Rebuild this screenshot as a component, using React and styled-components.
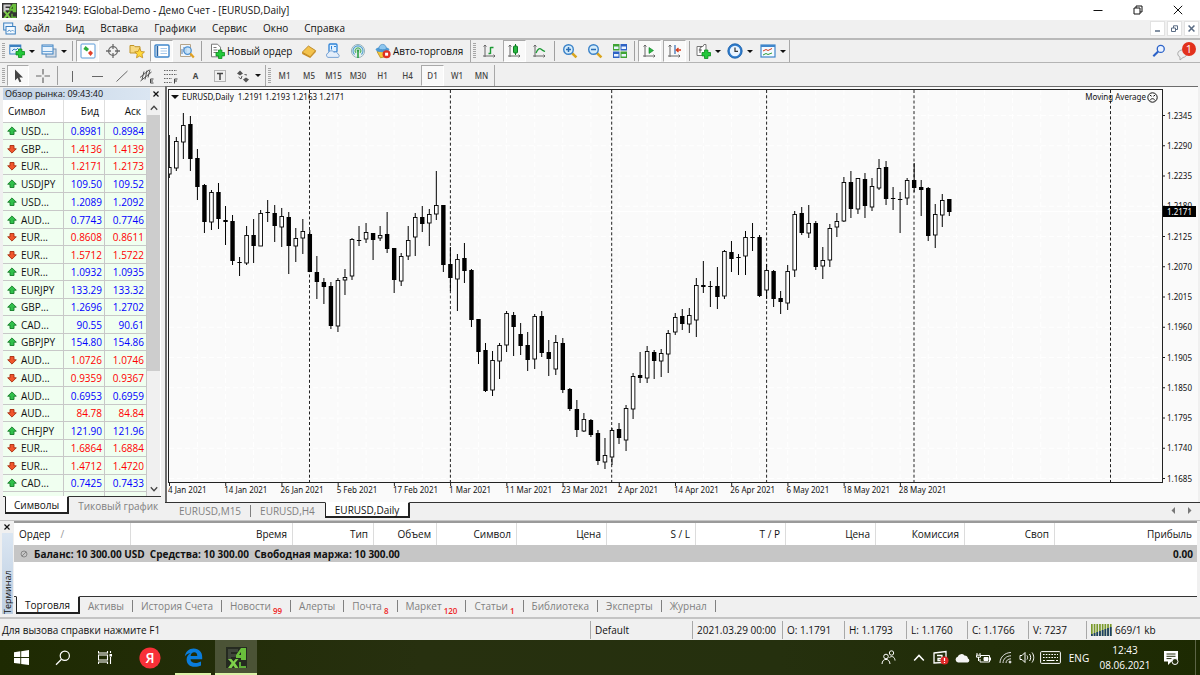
import React from "react";
import styled, { createGlobalStyle, css } from "styled-components";

const UI = '"Open Sans", "Noto Sans", sans-serif';
const SMALL = '"Noto Sans", "Open Sans", sans-serif';

const GlobalStyle = createGlobalStyle`
  *, *::before, *::after { box-sizing: border-box; }
  body { margin: 0; background: #f0f0f0; color: #111; font-family: ${UI}; font-size: 10px; line-height: 14px; }
  button { font: inherit; color: inherit; background: none; border: 0; padding: 0; margin: 0; white-space: nowrap; }
  svg { display: block; flex: none; }
`;

/* ---------- shell ---------- */
const Shell = styled.div`
  display: flex;
  flex-direction: column;
  height: 100vh;
  min-height: 560px;
  overflow: hidden;
`;
const TitleBar = styled.header`
  display: flex;
  align-items: center;
  flex: none;
  height: 20px;
  padding-left: 2px;
  gap: 4px;
  background: #fff;
`;
const AppTitle = styled.h1`
  flex: 1;
  margin: 0;
  font-size: 10px;
  font-weight: 400;
`;
const CaptionButton = styled.button`
  display: flex;
  align-items: center;
  justify-content: center;
  width: 40px;
  height: 18px;
`;
const CaptionGroup = styled.div`
  display: flex;
  padding-right: 2px;
`;
const MenuBar = styled.nav`
  display: flex;
  align-items: center;
  flex: none;
  height: 20px;
  padding: 0 0 2px 3px;
  border-bottom: 2px solid #b9b9b9;
`;
const MenuItem = styled.button`
  padding: 0 8px;
  font-size: 10px;
`;
const MdiGroup = styled.div`
  display: flex;
  gap: 2px;
  margin-left: auto;
  padding-right: 1px;
`;
const MdiButton = styled.button`
  display: flex;
  align-items: center;
  justify-content: center;
  width: 15px;
  height: 15px;
  background: #fff;
  border: 1px solid #e2e2e2;
`;

/* ---------- toolbars ---------- */
const Toolbar = styled.div`
  display: flex;
  align-items: stretch;
  flex: none;
  height: 23px;
  padding-top: ${(p) => (p.$last ? 2 : 0)}px;
  border-bottom: ${(p) => (p.$last ? "0" : "1px solid #b4b4b4")};
`;
const Strip = styled.div`
  display: flex;
  align-items: stretch;
  border-right: 1px solid #a8a8a8;
`;
const Grip = styled.span`
  flex: none;
  width: 6px;
  margin: 3px 0;
  background: repeating-linear-gradient(#a6a6a6 0 1px, transparent 1px 2px) 2px 0 / 3px 100% no-repeat;
`;
const Divider = styled.span`
  flex: none;
  width: 5px;
  margin: 1px 0;
  background: linear-gradient(#a0a0a0, #a0a0a0) 2px 0 / 1px 100% no-repeat;
`;
const Tool = styled.button`
  display: flex;
  align-items: center;
  justify-content: ${(p) => (p.$start ? "flex-start" : "center")};
  gap: ${(p) => (p.$menu ? 4 : 2)}px;
  padding-left: ${(p) => (p.$menu ? 3 : p.$start ? 5 : 0)}px;
  width: ${(p) => p.$w || 25}px;
  color: ${(p) => (p.$period ? "#444" : "#111")};
  font-family: ${(p) => (p.$period ? SMALL : UI)};
  font-size: ${(p) => (p.$period ? 8 : 10)}px;
  font-weight: ${(p) => (p.$period ? 500 : 400)};
  ${(p) =>
    p.$on &&
    css`
      margin: 0 1px;
      width: ${(p.$w || 25) - 2}px;
      background: #f9f9f9;
      border: 1px solid #a9a9a9;
      border-right-color: #fff;
      border-bottom-color: #fff;
    `}
`;
const Caret = styled.span`
  border: solid transparent;
  border-width: ${(p) => (p.$big ? "4px 4px 0" : "3px 3px 0")};
  border-top-color: #111;
`;
const ToolbarEnd = styled.div`
  display: flex;
  align-items: center;
  gap: 9px;
  margin-left: auto;
  padding-right: 3px;
`;

/* ---------- workspace ---------- */
const Workspace = styled.main`
  display: flex;
  flex: 1;
  min-height: 0;
  border-bottom: 1px solid #c4c4c4;
`;
const Watch = styled.section`
  display: flex;
  flex-direction: column;
  flex: none;
  width: 165px;
  padding: 0 4px 0 3px;
  border-top: 1px solid #a0a0a0;
`;
const WatchHead = styled.div`
  display: flex;
  align-items: center;
  height: 13px;
  flex: none;
`;
const WatchTitle = styled.h2`
  flex: 1;
  margin: 0;
  padding-left: 2px;
  height: 12px;
  line-height: 12px;
  font-size: 9px;
  font-weight: 400;
  background: linear-gradient(90deg, #c3d3e5, #dbe6f2);
`;
const CloseMini = styled.button`
  display: flex;
  align-items: center;
  justify-content: center;
  width: 11px;
  height: 12px;
`;
const WatchBody = styled.div`
  display: flex;
  flex: 1;
  min-height: 0;
  overflow: hidden;
  background: #fff;
`;
const WatchTable = styled.table`
  flex: none;
  width: 144px;
  height: 100px;
  table-layout: fixed;
  border-collapse: separate;
  border-spacing: 0;
  font-size: 10px;
  line-height: 12px;

  th { height: 22px; padding: 0 5px; font-weight: 400; text-align: right; border-right: 1px solid #dedede; }
  th:first-child { text-align: left; }
  tbody tr { height: 17px; }
  tbody tr:nth-child(2n), tbody tr:nth-child(10n + 5) { height: 18px; }
`;
const SymbolCell = styled.td`
  padding: 0 0 0 4px;
  background: #f0fff0;
  border: solid #c8c8c8;
  border-width: 1px 1px 0 0;
`;
const SymbolName = styled.span`
  display: flex;
  align-items: center;
  gap: 4px;
`;
const PriceCell = styled.td`
  padding: 0 2px 0 0;
  text-align: right;
  color: ${(p) => (p.$up ? "#0000ff" : "#ff0000")};
  background: #f0fff0;
  border: solid #c8c8c8;
  border-width: 1px 1px 0 0;
`;
const ScrollTrack = styled.div`
  display: flex;
  flex-direction: column;
  align-items: center;
  width: 13px;
  background: #f0f0f0;
`;
const ScrollButton = styled.button`
  display: flex;
  align-items: center;
  justify-content: center;
  width: 13px;
  height: 15px;
`;
const ScrollArea = styled.div`
  flex: 1;
  width: 100%;
`;
const ScrollThumb = styled.div`
  height: 70%;
  background: #cdcdcd;
`;

const Tabs = styled.div`
  display: flex;
  flex: none;
  align-items: center;
  height: ${(p) => p.$h || 18}px;
  padding-left: ${(p) => p.$indent || 0}px;
  color: #808080;
  border-top: 1px solid #333;
`;
const Tab = styled.button`
  display: flex;
  align-items: center;
  height: 12px;
  padding: 0 ${(p) => p.$pad || 9}px;
  border-right: 1px solid ${(p) => (p.$bare ? "transparent" : "#808080")};
  ${(p) =>
    p.$on &&
    css`
      align-self: stretch;
      height: auto;
      margin-top: -1px;
      color: #111;
      background: #fff;
      border: 1px solid #222;
      border-top-color: #fff;
      border-width: 1px 2px 2px 1px;
    `}
`;
const Count = styled.sub`
  align-self: flex-end;
  margin: 0 0 -4px 2px;
  font-size: 8px;
  line-height: 10px;
  font-weight: 600;
  color: #ee2222;
`;

/* ---------- chart ---------- */
const ChartColumn = styled.section`
  display: flex;
  flex-direction: column;
  flex: 1;
  min-width: 0;
`;
const ChartWindow = styled.div`
  display: grid;
  grid-template-columns: minmax(0, 1fr) 35px;
  grid-template-rows: minmax(0, 1fr) 19px;
  flex: 1;
  min-height: 0;
  margin-right: 2px;
  padding: 2px 0 0 1px;
  border: solid #6c6c6c;
  border-width: 1px 0 0 2px;
  background: #fafafa;
`;
const Plot = styled.div`
  position: relative;
  border: 1px solid #222;
  overflow: hidden;
`;
const PlotCaption = styled.div`
  position: absolute;
  top: 1px;
  left: 2px;
  display: flex;
  align-items: center;
  gap: 3px;
  font: 8px/12px ${SMALL};
  white-space: pre;
`;
const PlotExpert = styled(PlotCaption)`
  left: auto;
  right: 4px;
  gap: 1px;
`;
const AxisText = styled.text`
  font: 8px ${SMALL};
  fill: ${(p) => p.fill || "#111"};
`;
const ChartTabs = styled(Tabs)`
  height: 16px;
  margin-bottom: 2px;
`;
const TabScroll = styled.div`
  display: flex;
  align-items: center;
  gap: 11px;
  margin-left: auto;
  padding-right: 8px;
`;

/* ---------- terminal ---------- */
const Terminal = styled.section`
  display: flex;
  flex: none;
  height: 98px;
  padding: 0 3px 3px 0;
  border-bottom: 2px solid #c4c4c4;
`;
const TerminalRail = styled.div`
  display: flex;
  flex-direction: column;
  align-items: center;
  width: 14px;
`;
const RailTitle = styled.h2`
  flex: 1;
  width: 11px;
  margin: 0;
  writing-mode: vertical-rl;
  transform: rotate(180deg);
  font-size: 9px;
  line-height: 11px;
  font-weight: 400;
  background: linear-gradient(#bccde0, #dbe6f2);
`;
const TerminalMain = styled.div`
  display: flex;
  flex-direction: column;
  flex: 1;
  min-width: 0;
  border-top: 2px solid #9a9a9a;
`;
const TradePane = styled.div`
  flex: 1;
  min-height: 0;
  background: #fff;
`;
const TradeTable = styled.table`
  width: 100%;
  table-layout: fixed;
  border-collapse: separate;
  border-spacing: 0;

  th { height: 22px; padding: 0 5px; font-weight: 400; text-align: right; border-right: 1px solid #dcdcdc; }
  th:first-child { text-align: left; }
  th:last-child { border-right: 0; }
  td { height: 17px; padding: 0 4px; background: #c6c6c6; font-weight: 700; }
  td:last-child { text-align: right; }
`;
const Balance = styled.div`
  display: flex;
  align-items: center;
  gap: 6px;
  padding-left: 2px;
  white-space: pre;
`;
const SortMark = styled.span`
  padding-left: 10px;
  color: #999;
`;

/* ---------- status bar ---------- */
const StatusBar = styled.footer`
  display: flex;
  align-items: stretch;
  flex: none;
  height: 21px;
  padding: 2px 0 1px;
`;
const StatusCell = styled.span`
  display: flex;
  align-items: center;
  gap: 3px;
  width: ${(p) => p.$w}px;
  padding-left: 4px;
  border-left: 1px solid #a8a8a8;
  white-space: nowrap;
`;
const StatusHelp = styled.span`
  flex: 1;
  display: flex;
  align-items: center;
  padding-left: 2px;
`;

/* ---------- taskbar ---------- */
const Taskbar = styled.nav`
  display: flex;
  align-items: stretch;
  flex: none;
  height: 35px;
  color: #fff;
  background: linear-gradient(90deg, #1e2a02 0%, #27300f 35%, #25300e 65%, #1d2a02 100%);
`;
const TaskButton = styled.button`
  display: flex;
  align-items: center;
  justify-content: center;
  width: 42px;
  background: ${(p) => (p.$active ? "#4b5336" : "none")};
  ${(p) => p.$open && css`border-bottom: 2px solid #dcf2a8; padding-top: 2px;`}
  ${(p) => p.$open && !p.$active && css`width: 36px; margin: 0 4px;`}
`;
const TaskGap = styled.span`
  width: 3px;
`;
const Tray = styled.div`
  display: flex;
  align-items: center;
  margin-left: auto;
`;
const TrayButton = styled.button`
  display: flex;
  align-items: center;
  justify-content: center;
  width: ${(p) => p.$w || 21}px;
  height: 100%;
`;
const Clock = styled.div`
  width: 60px;
  text-align: center;
  line-height: 15px;
`;
const DesktopEdge = styled.span`
  align-self: stretch;
  width: 5px;
  margin-left: 8px;
  border-left: 1px solid #5c6446;
`;

/* ---------- icons ---------- */
const G = ({ s = 16, children }) => (
  <svg width={s} height={s} viewBox="0 0 16 16" fill="none" aria-hidden="true">{children}</svg>
);
const Plus = ({ x = 6, y = 6 }) => (
  <path transform={`translate(${x} ${y})`} d="M3 0.5h3.4V3h2.6v3.4H6.4V9H3V6.4H.5V3H3z" fill="#22c83a" stroke="#0b8a1c" strokeWidth=".8" />
);
const Axes = () => (
  <path d="M3 2v12M1 13h12M1.6 3.6 3 2l1.4 1.6M11.6 11.6 13 13l-1.4 1.4" stroke="#666" strokeWidth="1" />
);
const icons = {
  newChart: <G><rect x=".8" y="2" width="11" height="9" fill="#e3f1fc" stroke="#3a7fbf" /><path d="M1 3h11" stroke="#3a7fbf" strokeWidth="2" /><path d="M3 8l2-2 2 1 2-2" stroke="#3a7fbf" /><Plus x={6.5} y={5.5} /></G>,
  profiles: <G><rect x="5" y="6" width="10" height="8" fill="#d5dde6" stroke="#6d90b4" /><rect x="1" y="2" width="11" height="9" fill="#e8f3fd" stroke="#3a7fbf" /><path d="M1 3.5h11M1 8.5h11" stroke="#6ba4d8" /></G>,
  market: <G><rect x="1" y="1" width="14" height="14" rx="1" fill="#fff" stroke="#5b9bd8" /><path d="M5.5 3 9 6 7 8.6 3.4 6z" fill="#2fae3a" /><path d="M10.5 7.5 13 10l-2.4 3L8 10z" fill="#e0402a" /></G>,
  crosshair: <G><circle cx="8" cy="8" r="4.4" stroke="#6b6b6b" strokeWidth="1.3" /><path d="M8 1v5M8 10v5M1 8h5M10 8h5" stroke="#6b6b6b" strokeWidth="1.3" /></G>,
  folderStar: <G><path d="M1 2.500h4l1 1.200h5V10H1z" fill="#f7d981" stroke="#c09428" /><path d="m10.6 5.3 1.5 3.2 3.4.4-2.5 2.4.7 3.5-3.1-1.7-3.1 1.7.7-3.5-2.5-2.4 3.4-.4z" fill="#ffd83a" stroke="#c08a17" strokeWidth=".8" /></G>,
  terminal: <G><rect x="1" y="2" width="14" height="12" rx="1" fill="#fff" stroke="#3f86cb" strokeWidth="1.4" /><path d="M3.4 3v10" stroke="#2460a0" strokeWidth="1.6" /><path d="M6.5 5.5H13M6.5 8H13M6.5 10.5H13" stroke="#a6c8ea" /></G>,
  tester: <G><path d="M1.5 1.5h10v12h-10z" fill="#eef5fc" stroke="#b6a488" /><path d="M3 11V6M5 9V4M7 10V5" stroke="#5a7ea8" /><circle cx="8.6" cy="7.6" r="3.7" fill="#bfe0f8cc" stroke="#4c8fd0" strokeWidth="1.2" /><path d="m11.3 10.6 3.5 3.8" stroke="#e0a020" strokeWidth="2.2" /></G>,
  order: <G><path d="M2.5 1.2h6l3 3v9.6h-9z" fill="#fff" stroke="#777" /><path d="M4.5 4.5h3M4.5 7h4M4.5 9.5h3" stroke="#777" /><Plus x={6.5} y={6.5} /></G>,
  book: <G><path d="M1.2 9.2 7.4 3l7.2 4.6-5.4 6.2z" fill="#f3c24c" stroke="#b07a14" strokeWidth=".8" /><path d="M1.200 9.200v1.800l8 4 5.600-6V7.600l-5.600 6.200z" fill="#c98b1c" /></G>,
  cloudPc: <G><rect x="4" y="1" width="8" height="8" rx="1" fill="#dff0ff" stroke="#2f83d6" strokeWidth="1.3" /><path d="M6.500 3v3.500M9 3.500h2" stroke="#2f83d6" /><path d="M3 14.400a2.300 2.300 0 0 1 .2-4.400 3.200 3.200 0 0 1 5.800-.7 2.700 2.700 0 0 1 4 1.900 1.700 1.700 0 0 1 .2 3.200z" fill="#e4eefa" stroke="#7aa4d4" /></G>,
  signal: <G><circle cx="8" cy="8" r="6.6" fill="#e6eef0" stroke="#9ab4bc" /><path d="M4.6 11.5a5 5 0 1 1 6.8 0" stroke="#4e9fd0" strokeWidth="1.1" /><path d="M6 9.8a2.8 2.8 0 1 1 4 0" stroke="#55b563" strokeWidth="1.1" /><circle cx="8" cy="7.8" r="1.3" fill="#2fa045" /><path d="M8 8.5V15" stroke="#2fa045" strokeWidth="1.6" /></G>,
  auto: <G><path d="M2 8.5 13 7l-2 6.5-5.5 1.3z" fill="#f2c63c" stroke="#b88a1c" strokeWidth=".8" /><ellipse cx="7.5" cy="6.6" rx="6.8" ry="2.6" fill="#4e9bd6" /><path d="M3.8 6c0-3 1.7-4.6 3.8-4.6S11.400 3 11.400 6c-2 1-5.600 1-7.600 0z" fill="#8cc6ef" stroke="#4288c4" strokeWidth=".7" /><circle cx="11.6" cy="11.2" r="4" fill="#e03020" /><rect x="10.100" y="9.700" width="3" height="3" fill="#fff" /></G>,
  bars: <G><Axes /><path d="M8.500 4v7M8.500 4.500h3M6.500 10.500h2" stroke="#1c9a34" strokeWidth="1.400" /></G>,
  candles: <G><Axes /><path d="M8.500 1v11" stroke="#0f7a22" /><rect x="6.500" y="3" width="4" height="7" rx="1" fill="#27b840" stroke="#0f7a22" /></G>,
  line: <G><Axes /><path d="M4 10c2-5 4-5 5.500-3.500S12 8 13 8.500" stroke="#1c9a34" strokeWidth="1.300" /></G>,
  zoomIn: <G><path d="m9.800 9.800 4.600 4.600" stroke="#d9a51e" strokeWidth="2.600" /><circle cx="6.500" cy="6.500" r="4.800" fill="#d4ecfb" stroke="#3b82c8" strokeWidth="1.400" /><path d="M6.500 4v5M4 6.500h5" stroke="#2a6db4" strokeWidth="1.500" /></G>,
  zoomOut: <G><path d="m9.800 9.800 4.600 4.600" stroke="#d9a51e" strokeWidth="2.600" /><circle cx="6.500" cy="6.500" r="4.800" fill="#d4ecfb" stroke="#3b82c8" strokeWidth="1.400" /><path d="M4 6.500h5" stroke="#2a6db4" strokeWidth="1.500" /></G>,
  tile: <G><rect x="1" y="1" width="6.500" height="6.500" fill="#3fa435" /><rect x="8.500" y="1" width="6.500" height="6.500" fill="#2e62c4" /><rect x="1" y="8.500" width="6.500" height="6.500" fill="#2e62c4" /><rect x="8.500" y="8.500" width="6.500" height="6.500" fill="#3fa435" /><path d="M2 4.800h4.500M9.500 4.800H14M2 12.300h4.500M9.500 12.300H14" stroke="#e9f3ff" strokeWidth="2.600" /></G>,
  autoScroll: <G><Axes /><path d="M7 4.500v6l4.500-3z" fill="#27b840" stroke="#0f7a22" strokeWidth=".6" /></G>,
  shift: <G><Axes /><path d="M8 2v9" stroke="#2f6ab0" strokeWidth="1.200" /><path d="M14 7H9.500M11.500 5 9.300 7l2.200 2" stroke="#d43a1c" strokeWidth="1.300" /></G>,
  indicators: <G><path d="M2 3.500h6l1-2h2v11H2z" fill="#fff" stroke="#777" /><path d="M7 4c-1.500-.5-2 .5-2 2v4M3.800 7h3" stroke="#555" /><Plus x={6.500} y={6.500} /></G>,
  clock: <G><circle cx="8" cy="8" r="6.300" fill="#e9f4ff" stroke="#2f7ccc" strokeWidth="2.200" /><circle cx="8" cy="8" r="7.200" stroke="#1d5a9e" strokeWidth=".6" /><path d="M8 4.500V8.300h3" stroke="#333" strokeWidth="1.200" /></G>,
  template: <G><rect x="1" y="2" width="14" height="12" fill="#f4faff" stroke="#3f86cb" strokeWidth="1.200" /><path d="M1 3h14" stroke="#3f86cb" strokeWidth="2" /><path d="m3 8 3-1.500 2 1 4-2" stroke="#d43a1c" /><path d="m3 12 3-1.500 2 1L12 10" stroke="#2b9a3a" /></G>,
  cursor: <G><path d="M5 1.500v11l2.600-2.400 1.900 4.100 1.800-.8-1.900-4h3.600z" fill="#444" /></G>,
  cross: <G><path d="M8 1v5.500M8 9.500V15M1 8h5.500M9.500 8H15" stroke="#666" strokeWidth="1.200" /></G>,
  vline: <G><path d="M8.500 3v11" stroke="#666" /></G>,
  hline: <G><path d="M3 8.500h11" stroke="#666" /></G>,
  trend: <G><path d="M2.500 13.500l11-10.500" stroke="#666" /></G>,
  channel: <G><path d="M1 9.500 10 2M1.500 13 12.500 4M5 3.500l-2 8M8 2.500l-2 9M11 1.500l-2 8" stroke="#555" strokeWidth="1" /><path d="M14.500 11h-3v4h3M11.500 13h2.500" stroke="#444" /></G>,
  fibo: <G><path d="M1 2.500h13M1 6.500h13M1 10.500h8M1 14.500h8" stroke="#666" strokeDasharray="1.500 1" /><path d="M14.500 11h-3v4.500M11.500 13h2.500" stroke="#444" /></G>,
  label: <G><rect x="2.500" y="2.500" width="11" height="11" stroke="#777" strokeDasharray="1 1" /><path d="M5 5.500h6M8 5.500V12" stroke="#444" strokeWidth="1.500" /></G>,
  arrows: <G><path d="M2 5.500 5 2.500l3 3-3 2zM8 11.500l3-2 3 2-3 3z" fill="#555" /><path d="m3.500 9 2.500 2 1-3M9.500 6.500l2.500.5" stroke="#555" /></G>,
  search: <G s={14}><circle cx="10" cy="5.600" r="4" fill="#eaf2ff" stroke="#2b62c8" strokeWidth="1.500" /><path d="M7 8.500 1.500 14" stroke="#2b62c8" strokeWidth="2.400" /></G>,
};
const AppMark = ({ s, dark }) => (
  <svg width={s} height={s} viewBox="0 0 21 21" aria-hidden="true">
    {dark ? <rect width="21" height="21" fill="#252a20" /> : <rect width="21" height="21" fill="#333" />}
    <path d="M2 2h10v3H5v2h5v3H5v3H2z" fill={dark ? "#3f463a" : "#ccc"} />
    <path d="M15 1h5v12h-5v-2h-5V8z" fill="#6abf3c" /><path d="M13 8h2V5z" fill="#222" />
    <path d="m2 12 3.500 0 2 2.500 2-2.500h3l-3.500 4 3.500 5H9l-1.700-2.500L5.600 21H2l3.600-5z" fill="#7fd04a" /><path d="M13 15h2v4h5v2h-7z" fill="#5fae38" />
  </svg>
);
const CrossIcon = ({ s = 10, w = 1, c = "#111" }) => (
  <svg width={s} height={s} viewBox="0 0 10 10" aria-hidden="true"><path d="M.8.8l8.400 8.400M9.200.8.8 9.200" stroke={c} strokeWidth={w} /></svg>
);
const TrendArrow = ({ up }) => (
  <svg width="10" height="10" viewBox="0 0 10 10" aria-hidden="true">
    <path transform={up ? undefined : "rotate(180 5 5)"} d="M5 .9 9.300 5.200H7V8.500H3V5.200H.7z" fill={up ? "#2fc04a" : "#f0562c"} stroke={up ? "#147a28" : "#a82c10"} strokeWidth=".9" />
  </svg>
);
const Chevron = ({ down, s = 8, c = "#444", w = 1.3 }) => (
  <svg width={s} height={s} viewBox="0 0 8 8" fill="none" aria-hidden="true"><path d={down ? "M.8 2.300 4 5.700l3.200-3.400" : "M.8 5.700 4 2.300l3.200 3.400"} stroke={c} strokeWidth={w} /></svg>
);

/* ---------- data ---------- */
const quotes = [
  ["USD...", "0.8981", "0.8984", 1], ["GBP...", "1.4136", "1.4139", 0], ["EUR...", "1.2171", "1.2173", 0],
  ["USDJPY", "109.50", "109.52", 1], ["USD...", "1.2089", "1.2092", 1], ["AUD...", "0.7743", "0.7746", 1],
  ["EUR...", "0.8608", "0.8611", 0], ["EUR...", "1.5712", "1.5722", 0], ["EUR...", "1.0932", "1.0935", 1],
  ["EURJPY", "133.29", "133.32", 1], ["GBP...", "1.2696", "1.2702", 1], ["CAD...", "90.55", "90.61", 1],
  ["GBPJPY", "154.80", "154.86", 1], ["AUD...", "1.0726", "1.0746", 0], ["AUD...", "0.9359", "0.9367", 0],
  ["AUD...", "0.6953", "0.6959", 1], ["AUD...", "84.78", "84.84", 0], ["CHFJPY", "121.90", "121.96", 1],
  ["EUR...", "1.6864", "1.6884", 0], ["EUR...", "1.4712", "1.4720", 0], ["CAD...", "0.7425", "0.7433", 1],
  ["NZD...", "78.80", "78.84", 1],
];
const menu = ["Файл", "Вид", "Вставка", "Графики", "Сервис", "Окно", "Справка"];
const dates = ["4 Jan 2021", "14 Jan 2021", "26 Jan 2021", "5 Feb 2021", "17 Feb 2021", "1 Mar 2021", "11 Mar 2021", "23 Mar 2021", "2 Apr 2021", "14 Apr 2021", "26 Apr 2021", "6 May 2021", "18 May 2021", "28 May 2021"];
const prices = ["1.2345", "1.2290", "1.2235", "1.2180", "1.2125", "1.2070", "1.2015", "1.1960", "1.1905", "1.1850", "1.1795", "1.1740", "1.1685"];
/* high, body top, body bottom, low, falling */
const candles = [
  [135,167,174,178,0],[137,141,168,171,0],[113,125,142,159,0],[116,124,159,171,1],[149,158,187,200,1],[184,185,222,233,1],[190,192,222,230,0],[183,192,219,229,1],
  [206,220,222,245,1],[215,221,261,265,1],[257,262,263,276,1],[226,235,263,265,0],[219,235,246,263,1],[210,213,246,246,0],[200,212,213,222,1],[205,213,226,242,1],
  [208,216,227,247,0],[212,217,246,274,1],[228,238,246,262,0],[219,231,238,254,0],[230,234,272,272,1],[256,272,282,299,1],[278,282,287,304,1],[282,286,326,329,1],
  [278,280,326,332,0],[269,277,280,295,0],[238,239,276,280,0],[226,240,241,246,1],[223,232,239,243,0],[233,233,240,260,1],[226,235,238,241,0],[212,234,249,253,1],
  [248,248,280,293,1],[253,256,281,286,0],[226,240,256,260,0],[213,217,237,256,0],[206,217,224,232,1],[209,214,223,246,0],[171,205,214,220,0],[205,205,265,272,1],
  [247,264,278,291,1],[254,259,279,311,0],[243,258,271,283,1],[269,270,320,327,1],[319,319,352,364,1],[343,350,391,392,1],[351,360,390,396,0],[343,345,361,379,0],
  [311,313,345,352,0],[312,315,327,356,1],[323,334,346,355,1],[332,345,360,371,1],[314,316,359,369,0],[311,316,353,357,1],[340,352,359,376,1],[335,342,369,375,0],
  [338,343,390,393,1],[388,389,409,411,1],[400,409,430,437,1],[413,419,431,432,0],[419,420,435,437,1],[430,433,461,465,1],[438,455,462,469,0],[428,430,457,465,0],
  [423,429,438,444,1],[405,408,440,451,0],[373,376,409,419,0],[352,375,378,383,1],[346,351,378,383,0],[350,352,361,379,1],[349,353,361,377,0],[330,333,354,373,0],
  [313,317,332,335,0],[309,316,324,330,1],[308,315,324,333,0],[278,285,320,337,0],[261,285,287,293,1],[281,286,287,307,1],[267,286,297,309,1],[250,251,296,299,0],
  [241,252,259,272,1],[254,257,258,275,1],[231,237,256,275,0],[223,237,238,251,1],[235,237,296,297,1],[264,270,290,299,0],[270,271,299,307,1],[291,298,302,314,1],
  [265,271,303,310,0],[211,214,270,277,0],[207,213,233,235,1],[205,223,233,238,0],[221,223,267,270,1],[247,260,266,279,0],[224,228,260,267,0],[213,221,227,237,0],
  [177,182,221,222,0],[171,182,209,218,1],[178,178,209,214,0],[173,179,206,218,1],[178,186,207,211,0],[159,168,188,190,0],[161,167,199,205,1],[187,198,199,210,1],
  [192,199,200,233,1],[178,180,198,205,0],[163,180,188,192,1],[180,187,190,216,1],[187,188,236,241,1],[204,214,235,248,0],[194,200,215,227,0],[199,199,212,216,1],
];
const TOP = 90;
const months = [140.5, 281.4, 442.7, 597.6, 745, 941.5];
const priceY = (i) => 25.5 + i * 30.25;

const PlotDrawing = () => (
  <svg width="100%" height="100%" role="img" aria-label="EURUSD, Daily">
    {Array.from({ length: 80 }, (_, i) => (
      <line key={i} x1={28.400 + i * 28.110} x2={28.400 + i * 28.110} y1="0" y2="100%" stroke="#fff" strokeDasharray="5 3" />
    ))}
    {Array.from({ length: 40 }, (_, i) => (
      <line key={i} x1="0" x2="100%" y1={priceY(i)} y2={priceY(i)} stroke="#fff" strokeDasharray="5 3" />
    ))}
    <line x1="0" x2="100%" y1="121.500" y2="121.500" stroke="#fff" />
    {months.map((x) => (
      <line key={x} x1={x} x2={x} y1="0" y2="100%" stroke="#222" strokeDasharray="3 2.270" />
    ))}
    {candles.map(([h, t, b, l, down], i) => {
      const x = 0.300 + i * 7.027;
      return (
        <g key={i}>
          <line x1={x} x2={x} y1={h - TOP} y2={l - TOP} stroke="#000" />
          {down ? (
            <rect x={x - 2.200} y={t - TOP} width="4.400" height={Math.max(1, b - t)} fill="#000" />
          ) : (
            <rect x={x - 1.800} y={t - TOP + 0.5} width="3.600" height={b - t - 0.5} fill="#fff" stroke="#000" strokeWidth=".9" />
          )}
        </g>
      );
    })}
  </svg>
);
const PriceAxis = () => (
  <svg width="35" height="100%">
    {prices.map((p, i) => (
      <g key={p}>
        <path d={`M0 ${priceY(i) + 1}h2`} stroke="#222" />
        <AxisText x="4" y={priceY(i) + 4}>{p}</AxisText>
      </g>
    ))}
    <rect x="0" y="117" width="33" height="11" fill="#000" />
    <AxisText x="4" y="125.500" fill="#fff">1.2171</AxisText>
  </svg>
);
const DateAxis = () => (
  <svg width="100%" height="19">
    {dates.map((d, i) => (
      <g key={d}>
        <path d={`M${1.500 + i * 56.220} 0v3`} stroke="#222" />
        <AxisText x={i * 56.220} y="10">{d}</AxisText>
      </g>
    ))}
  </svg>
);

const columns = [["Ордер", 117], ["Время", 162], ["Тип", 81], ["Объем", 63], ["Символ", 80], ["Цена", 90], ["S / L", 89], ["T / P", 90], ["Цена", 90], ["Комиссия", 89], ["Своп", 90], ["Прибыль", null]];
const terminalTabs = [["Торговля"], ["Активы"], ["История Счета"], ["Новости", 99], ["Алерты"], ["Почта", 8], ["Маркет", 120], ["Статьи", 1], ["Библиотека"], ["Эксперты"], ["Журнал"]];
const periods = [["M1", 25], ["M5", 24], ["M15", 25], ["M30", 24], ["H1", 25], ["H4", 25], ["D1", 25], ["W1", 24], ["MN", 25]];

const IconTool = ({ name, label, w, on }) => (
  <Tool type="button" aria-label={label} aria-pressed={on} $w={w} $on={on}>{icons[name]}</Tool>
);
const MenuTool = ({ name, label, w = 32 }) => (
  <Tool type="button" aria-label={label} aria-haspopup="menu" $w={w} $start $menu>{icons[name]}<Caret /></Tool>
);

const MainToolbar = () => (
  <Toolbar role="toolbar" aria-label="Стандартная">
    <Strip>
      <Grip />
      <MenuTool name="newChart" label="Новый график" />
      <MenuTool name="profiles" label="Профили" />
      <Divider />
      <IconTool name="market" label="Обзор рынка" on />
      <IconTool name="crosshair" label="Окно данных" />
      <IconTool name="folderStar" label="Навигатор" w={24} />
      <IconTool name="terminal" label="Терминал" on />
      <IconTool name="tester" label="Тестер стратегий" />
      <Divider />
      <Tool type="button" $w={92} $start>{icons.order}Новый ордер</Tool>
      <IconTool name="book" label="Редактор" />
      <IconTool name="cloudPc" label="Хостинг" w={24} />
      <IconTool name="signal" label="Сигналы" />
      <Tool type="button" $w={100} $start>{icons.auto}Авто-торговля</Tool>
    </Strip>
    <Strip>
      <Grip />
      <IconTool name="bars" label="Бары" />
      <IconTool name="candles" label="Свечи" on />
      <IconTool name="line" label="Линия" />
      <Divider />
      <IconTool name="zoomIn" label="Увеличить" />
      <IconTool name="zoomOut" label="Уменьшить" />
      <IconTool name="tile" label="Окна рядом" />
      <Divider />
      <IconTool name="autoScroll" label="Автопрокрутка" on />
      <IconTool name="shift" label="Сдвиг графика" on />
      <Divider />
      <MenuTool name="indicators" label="Индикаторы" />
      <MenuTool name="clock" label="Периоды" w={33} />
      <MenuTool name="template" label="Шаблоны" />
    </Strip>
    <ToolbarEnd>
      <button type="button" aria-label="Поиск">{icons.search}</button>
      <button type="button" aria-label="Сообщения: 1">
        <svg width="22" height="20" viewBox="0 0 22 20" aria-hidden="true">
          <path d="M3 14a4.500 3.800 0 1 1 5 2.500L5 19v-2.800A4 4 0 0 1 3 14z" fill="#eee" stroke="#aaa" />
          <circle cx="14" cy="8" r="7" fill="#e2311d" />
          <text x="14" y="12" textAnchor="middle" fill="#fff" fontSize="11" fontFamily="Open Sans, sans-serif">1</text>
        </svg>
      </button>
    </ToolbarEnd>
  </Toolbar>
);

const DrawToolbar = () => (
  <Toolbar $last role="toolbar" aria-label="Графические инструменты">
    <Strip>
      <Grip />
      <IconTool name="cursor" label="Курсор" on w={24} />
      <IconTool name="cross" label="Перекрестие" />
      <Divider />
      <IconTool name="vline" label="Вертикальная линия" w={24} />
      <IconTool name="hline" label="Горизонтальная линия" />
      <IconTool name="trend" label="Трендовая линия" />
      <IconTool name="channel" label="Канал" />
      <IconTool name="fibo" label="Фибоначчи" w={24} />
      <Tool type="button" $period $w={25}><b>A</b></Tool>
      <IconTool name="label" label="Метка" w={24} />
      <MenuTool name="arrows" label="Стрелки" w={33} />
    </Strip>
    <Strip>
      <Grip />
      {periods.map(([p, w]) => (
        <Tool key={p} type="button" $period $w={w} $on={p === "D1"} aria-pressed={p === "D1"}>{p}</Tool>
      ))}
    </Strip>
  </Toolbar>
);

const TabPad = styled.div`
  flex: none;
  height: 6px;
`;
const MarketWatch = () => (
  <Watch>
    <WatchHead>
      <WatchTitle>Обзор рынка: 09:43:40</WatchTitle>
      <CloseMini type="button" aria-label="Закрыть обзор рынка"><CrossIcon s={6} w={2} /></CloseMini>
    </WatchHead>
    <WatchBody>
      <WatchTable>
        <colgroup><col width="61" /><col width="41" /><col width="42" /></colgroup>
        <thead><tr><th scope="col">Символ</th><th scope="col">Бид</th><th scope="col">Аск</th></tr></thead>
        <tbody>
          {quotes.map(([s, bid, ask, up], i) => (
            <tr key={i}>
              <SymbolCell><SymbolName><TrendArrow up={up} />{s}</SymbolName></SymbolCell>
              <PriceCell $up={up}>{bid}</PriceCell>
              <PriceCell $up={up}>{ask}</PriceCell>
            </tr>
          ))}
        </tbody>
      </WatchTable>
      <ScrollTrack>
        <ScrollButton type="button" aria-label="Вверх"><Chevron /></ScrollButton>
        <ScrollArea><ScrollThumb /></ScrollArea>
        <ScrollButton type="button" aria-label="Вниз"><Chevron down /></ScrollButton>
      </ScrollTrack>
    </WatchBody>
    <Tabs $indent={2}>
      <Tab type="button" $on $pad={8}>Символы</Tab>
      <Tab type="button" $bare>Тиковый график</Tab>
    </Tabs>
    <TabPad />
  </Watch>
);

const ChartArea = () => (
  <ChartColumn>
    <ChartWindow>
      <Plot>
        <PlotDrawing />
        <PlotCaption><Caret $big />{"EURUSD,Daily  1.2191 1.2193 1.2163 1.2171"}</PlotCaption>
        <PlotExpert>
          Moving Average
          <svg width="11" height="11" viewBox="0 0 11 11" fill="none" aria-hidden="true">
            <circle cx="5.500" cy="5.500" r="4.700" stroke="#111" />
            <path d="M3 3.200l1.600 1M8 3.200l-1.600 1M3 8.400c1.300-2.300 3.700-2.300 5 0" stroke="#111" />
          </svg>
        </PlotExpert>
      </Plot>
      <PriceAxis />
      <DateAxis />
    </ChartWindow>
    <ChartTabs $indent={5}>
      <Tab type="button">EURUSD,M15</Tab>
      <Tab type="button" $bare>EURUSD,H4</Tab>
      <Tab type="button" $on>EURUSD,Daily</Tab>
      <TabScroll>
        <svg width="5" height="7" viewBox="0 0 5 7" aria-hidden="true"><path d="M4 0v7L.5 3.500z" fill="#777" /></svg>
        <svg width="5" height="7" viewBox="0 0 5 7" aria-hidden="true"><path d="M1 0v7l3.500-3.500z" fill="#777" /></svg>
      </TabScroll>
    </ChartTabs>
  </ChartColumn>
);

const TerminalPanel = () => (
  <Terminal>
    <TerminalRail>
      <CloseMini type="button" aria-label="Закрыть терминал"><CrossIcon s={6} w={2} /></CloseMini>
      <RailTitle>Терминал</RailTitle>
    </TerminalRail>
    <TerminalMain>
      <TradePane>
        <TradeTable>
          <colgroup>{columns.map(([n, w], i) => <col key={n + i} width={w || undefined} />)}</colgroup>
          <thead>
            <tr>{columns.map(([n], i) => <th key={n + i} scope="col">{n}{i === 0 && <SortMark>/</SortMark>}</th>)}</tr>
          </thead>
          <tbody>
            <tr>
              <td colSpan={11}>
                <Balance>
                  <svg width="8" height="8" viewBox="0 0 8 8" fill="none" aria-hidden="true"><circle cx="4" cy="4" r="3" stroke="#888" /><path d="M2 6l4-4" stroke="#888" /></svg>
                  {"Баланс: 10 300.00 USD  Средства: 10 300.00  Свободная маржа: 10 300.00"}
                </Balance>
              </td>
              <td>0.00</td>
            </tr>
          </tbody>
        </TradeTable>
      </TradePane>
      <Tabs $indent={2}>
        {terminalTabs.map(([n, c], i) => (
          <Tab key={n} type="button" $on={i === 0} $pad={i === 0 ? 8 : 8}>{n}{c && <Count>{c}</Count>}</Tab>
        ))}
      </Tabs>
    </TerminalMain>
  </Terminal>
);

const Status = () => (
  <StatusBar>
    <StatusHelp>Для вызова справки нажмите F1</StatusHelp>
    <StatusCell $w={102}>Default</StatusCell>
    <StatusCell $w={90}>2021.03.29 00:00</StatusCell>
    <StatusCell $w={62}>O: 1.1791</StatusCell>
    <StatusCell $w={62}>H: 1.1793</StatusCell>
    <StatusCell $w={61}>L: 1.1760</StatusCell>
    <StatusCell $w={61}>C: 1.1766</StatusCell>
    <StatusCell $w={58}>V: 7237</StatusCell>
    <StatusCell $w={114}>
      <svg width="21" height="12" viewBox="0 0 21 12" aria-hidden="true">
        {Array.from({ length: 8 }, (_, i) => (
          <g key={i}>
            <rect x={i * 2.700} y="0" width="1.700" height="12" fill="#7a9a2a" />
            <rect x={i * 2.700} y={10 - i} width="1.700" height={2 + i} fill="#1c3f66" />
          </g>
        ))}
      </svg>
      669/1 kb
    </StatusCell>
  </StatusBar>
);

const TaskBar = () => (
  <Taskbar>
    <TaskButton type="button" aria-label="Пуск"><svg width="15" height="15" viewBox="0 0 15 15" aria-hidden="true"><path d="M0 2.200 6.300 1.300v5.800H0zM7.200 1.200 15 0v7.100H7.200zM0 8h6.300v5.800L0 12.900zM7.200 8H15v7l-7.800-1.100z" fill="#fff" /></svg></TaskButton>
    <TaskButton type="button" aria-label="Поиск"><svg width="16" height="16" viewBox="0 0 16 16" fill="none" aria-hidden="true"><circle cx="9.800" cy="5.800" r="4.600" stroke="#fff" strokeWidth="1.200" /><path d="M6.500 9.200 1 14.800" stroke="#fff" strokeWidth="1.300" /></svg></TaskButton>
    <TaskButton type="button" aria-label="Представление задач"><svg width="15" height="15" viewBox="0 0 15 15" fill="none" aria-hidden="true"><path d="M.5 1v2h9V1M.5 14v-2h9v2M.5 5h9v5h-9zM12.500 1v2M12.500 7v7" stroke="#fff" strokeWidth="1.100" /><rect x="11.500" y="4" width="2.500" height="2.500" fill="#fff" /></svg></TaskButton>
    <TaskGap />
    <TaskButton type="button" aria-label="Яндекс"><svg width="22" height="22" viewBox="0 0 22 22" aria-hidden="true"><circle cx="11" cy="11" r="10.600" fill="#f83038" /><text x="11" y="16" textAnchor="middle" fill="#fff" fontSize="14" fontWeight="600" fontFamily="Open Sans, sans-serif">Я</text></svg></TaskButton>
    <TaskButton type="button" aria-label="Edge" $open><svg width="19" height="19" viewBox="0 0 19 19" aria-hidden="true"><path d="M.8 8.600C1.500 3.700 5 .6 9.700.6c5.300 0 8.500 3.600 8.500 8.400v2.200H6.500c.1 2.500 2.300 3.700 5 3.700 2 0 3.900-.6 5.500-1.500v4c-1.700.9-3.900 1.400-6.300 1.400-5 0-8.100-2.900-8.100-7.300 0-2.800 1.500-5.200 4-6.500C3.700 5.400 1.900 6.700.8 8.600zM6.600 7.900h6.700c0-2.200-1-3.700-3.100-3.700-1.900 0-3.300 1.300-3.600 3.700z" fill="#0a7ddc" /></svg></TaskButton>
    <TaskButton type="button" aria-label="EGlobal" $open $active><AppMark s={21} dark /></TaskButton>
    <Tray>
      <TrayButton type="button" aria-label="Люди" $w={40}><svg width="15" height="15" viewBox="0 0 15 15" fill="none" stroke="#fff" aria-hidden="true"><circle cx="5" cy="6.500" r="2.300" /><path d="M1 14c.2-3 1.700-4.600 4-4.600s3.700 1.600 4 4.600" /><circle cx="10.500" cy="3" r="2.200" /><path d="M8.500 7.500c2.800-2.200 5.300-.2 5.500 3" /></svg></TrayButton>
      <TrayButton type="button" aria-label="Скрытые значки" $w={22}><Chevron s={12} c="#fff" w={1} /></TrayButton>
      <TrayButton type="button" aria-label="Состояние" $w={22}><svg width="16" height="15" viewBox="0 0 16 15" fill="none" aria-hidden="true"><path d="M1 3l12-1.500v11L1 13z" stroke="#fff" strokeWidth="1.300" /><path d="M4 5.500h5v3H5v2h3" stroke="#fff" strokeWidth="1.300" /><circle cx="11.500" cy="10.500" r="4" fill="#e02828" /><path d="M11.500 8v3M11.500 12v1" stroke="#fff" strokeWidth="1.200" /></svg></TrayButton>
      <TrayButton type="button" aria-label="OneDrive"><svg width="15" height="10" viewBox="0 0 15 10" aria-hidden="true"><path d="M3 9.500a3 3 0 0 1-.3-5.800A4 4 0 0 1 9.500 2.500a3.500 3.500 0 0 1 3.500 3 2.100 2.100 0 0 1-.3 4z" fill="#f4f4f4" /></svg></TrayButton>
      <TrayButton type="button" aria-label="Батарея"><svg width="15" height="12" viewBox="0 0 15 12" fill="none" stroke="#fff" aria-hidden="true"><path d="M5 3.500h8.500v6.500H4V7" /><path d="M14.500 5.500v3" /><path d="M8 5.500h4v3H8z" fill="#fff" /><path d="M1 1v2M4 1v2M.5 3.200h4v2h-4zM2.500 5v4" /></svg></TrayButton>
      <TrayButton type="button" aria-label="Wi-Fi" $w={22}><svg width="13" height="13" viewBox="0 0 13 13" fill="none" stroke="#ddd" aria-hidden="true"><path d="M1 12C1 6 6 1.500 12 1.500M4 12c0-4 3.500-7.200 8-7.200M7 12c0-2.500 2-4.200 5-4.200" /><circle cx="11" cy="11" r="1" fill="#fff" /></svg></TrayButton>
      <TrayButton type="button" aria-label="Звук"><svg width="16" height="13" viewBox="0 0 16 13" fill="none" stroke="#fff" aria-hidden="true"><path d="M1 4.500h2L6 1.500v10l-3-3H1z" /><path d="M8 4.500c.8 1.200.8 2.800 0 4M10.500 3c1.600 2 1.600 5 0 7M13 1.500c2.300 3 2.300 7 0 10" /></svg></TrayButton>
      <TrayButton type="button" aria-label="Клавиатура" $w={26}><svg width="21" height="13" viewBox="0 0 21 13" fill="none" stroke="#fff" aria-hidden="true"><rect x=".6" y=".6" width="19.800" height="11.800" rx="1" /><path d="M3 3.500h15M3 6.500h15" strokeDasharray="1.600 1.200" /><path d="M3 9.500h2M6.500 9.500h8M16 9.500h2" /></svg></TrayButton>
      <TrayButton type="button" $w={32}>ENG</TrayButton>
      <Clock>12:43<br />08.06.2021</Clock>
      <TrayButton type="button" aria-label="Уведомления" $w={32}><svg width="16" height="16" viewBox="0 0 16 16" fill="none" aria-hidden="true"><path d="M1 1h14v10.500H8.500L5 15v-3.500H1z" fill="#fff" /><path d="M3.500 4h9M3.500 6.300h9M3.500 8.600h5" stroke="#26300f" /><circle cx="12" cy="11.500" r="3" fill="#26300f" stroke="#fff" /></svg></TrayButton>
      <DesktopEdge />
    </Tray>
  </Taskbar>
);

export default function App() {
  return (
    <Shell>
      <GlobalStyle />
      <TitleBar>
        <AppMark s={15} />
        <AppTitle>1235421949: EGlobal-Demo - Демо Счет - [EURUSD,Daily]</AppTitle>
        <CaptionGroup>
          <CaptionButton type="button" aria-label="Свернуть"><svg width="10" height="10" viewBox="0 0 10 10" aria-hidden="true"><path d="M.5 5.500h9" stroke="#111" /></svg></CaptionButton>
          <CaptionButton type="button" aria-label="Восстановить"><svg width="10" height="10" viewBox="0 0 10 10" fill="none" stroke="#111" aria-hidden="true"><path d="M1 3h6v6H1zM3 3V1h6v6H7" /></svg></CaptionButton>
          <CaptionButton type="button" aria-label="Закрыть"><CrossIcon /></CaptionButton>
        </CaptionGroup>
      </TitleBar>
      <MenuBar>
        <svg width="13" height="13" viewBox="0 0 13 13" fill="none" aria-hidden="true"><rect x=".7" y="1" width="9" height="7" fill="#eaf4fe" stroke="#3a7fbf" /><rect x="3" y="4.500" width="9.300" height="7.500" fill="#f4faff" stroke="#3a7fbf" /><path d="M4.500 10l1.500-2 2 1.500L9.500 8l1.500 1.500" stroke="#3a7fbf" strokeWidth=".8" /></svg>
        {menu.map((m) => <MenuItem key={m} type="button">{m}</MenuItem>)}
        <MdiGroup>
          <MdiButton type="button" aria-label="Свернуть график"><svg width="7" height="7" viewBox="0 0 7 7" aria-hidden="true"><path d="M1 6h5" stroke="#5a6c84" strokeWidth="1.500" /></svg></MdiButton>
          <MdiButton type="button" aria-label="Восстановить график"><svg width="7" height="7" viewBox="0 0 7 7" fill="none" stroke="#5a6c84" aria-hidden="true"><path d="M.5 3h4v3.500h-4zM2.500 3V.8h4V4.500h-2" /></svg></MdiButton>
          <MdiButton type="button" aria-label="Закрыть график"><CrossIcon s={7} w={2.200} c="#5a6c84" /></MdiButton>
        </MdiGroup>
      </MenuBar>
      <MainToolbar />
      <DrawToolbar />
      <Workspace>
        <MarketWatch />
        <ChartArea />
      </Workspace>
      <TerminalPanel />
      <Status />
      <TaskBar />
    </Shell>
  );
}
